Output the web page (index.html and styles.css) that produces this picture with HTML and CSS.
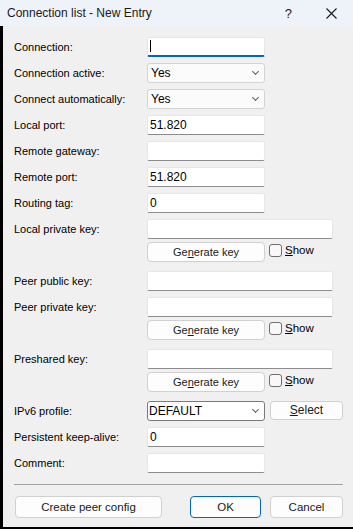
FILE: index.html
```html
<!DOCTYPE html>
<html lang="en">
  <head>
    <meta charset="UTF-8" />
    <meta name="viewport" content="width=device-width, initial-scale=1.0" />
    <title>Connection list - New Entry</title>
    <link rel="stylesheet" href="styles.css">
  </head>
  <body>
    <div class="titlebar">
      <span class="title">Connection list - New Entry</span>
      <span class="help">?</span>
      <svg class="close" width="11" height="11" viewBox="0 0 11 11">
        <path d="M0.5 0.5 L10.5 10.5 M10.5 0.5 L0.5 10.5" stroke="#1a1a1a" stroke-width="1.1" fill="none" />
      </svg>
    </div>

    <div class="frame">
      <div class="client">
        <div class="form">
          <div class="row">
            <span class="label">Connection:</span>
            <div class="edit focus"><span class="caret"></span></div>
          </div>
          <div class="row">
            <span class="label">Connection active:</span>
            <div class="combo">Yes<span class="chevron"></span></div>
          </div>
          <div class="row">
            <span class="label">Connect automatically:</span>
            <div class="combo">Yes<span class="chevron"></span></div>
          </div>
          <div class="row">
            <span class="label">Local port:</span>
            <div class="edit">51.820</div>
          </div>
          <div class="row">
            <span class="label">Remote gateway:</span>
            <div class="edit"></div>
          </div>
          <div class="row">
            <span class="label">Remote port:</span>
            <div class="edit">51.820</div>
          </div>
          <div class="row">
            <span class="label">Routing tag:</span>
            <div class="edit">0</div>
          </div>

          <div class="row key">
            <span class="label">Local private key:</span>
            <div class="keybox">
              <div class="edit wide"></div>
              <div class="keytools">
                <div class="button gen">Ge<u>n</u>erate key</div>
                <span class="check"><span class="box"></span><span><u>S</u>how</span></span>
              </div>
            </div>
          </div>
          <div class="row">
            <span class="label">Peer public key:</span>
            <div class="edit wide"></div>
          </div>
          <div class="row key">
            <span class="label">Peer private key:</span>
            <div class="keybox">
              <div class="edit wide"></div>
              <div class="keytools">
                <div class="button gen">Ge<u>n</u>erate key</div>
                <span class="check"><span class="box"></span><span><u>S</u>how</span></span>
              </div>
            </div>
          </div>
          <div class="row key">
            <span class="label">Preshared key:</span>
            <div class="keybox">
              <div class="edit wide"></div>
              <div class="keytools">
                <div class="button gen">Ge<u>n</u>erate key</div>
                <span class="check"><span class="box"></span><span><u>S</u>how</span></span>
              </div>
            </div>
          </div>

          <div class="row">
            <span class="label">IPv6 profile:</span>
            <div class="pick">
              <div class="combo editable">DEFAULT<span class="chevron"></span></div>
              <div class="button select"><u>S</u>elect</div>
            </div>
          </div>
          <div class="row">
            <span class="label">Persistent keep-alive:</span>
            <div class="edit">0</div>
          </div>
          <div class="row">
            <span class="label">Comment:</span>
            <div class="edit"></div>
          </div>
        </div>

        <div class="sep"></div>

        <div class="actions">
          <div class="button peer">Create peer config</div>
          <div class="button ok">OK</div>
          <div class="button cancel">Cancel</div>
        </div>
      </div>
    </div>
  </body>
</html>
```

FILE: styles.css
```css
/* Global */
* {
  box-sizing: border-box;
}

body {
  margin: 0;
  width: 353px;
  height: 529px;
  overflow: hidden;
  background-color: #000000;
  font-family: "Liberation Sans", Arial, sans-serif;
  font-size: 11px;
  color: #000000;
}

/* Title bar */
.titlebar {
  height: 26px;
  background-color: #eef2f9;
  display: flex;
  align-items: center;
  padding-left: 7px;
}

.title {
  font-size: 12px;
  color: #1a1a1a;
  flex: 1;
}

.help {
  font-size: 13px;
  color: #1a1a1a;
  margin-right: 34px;
}

.close {
  margin-right: 16px;
}

/* Window body */
.frame {
  height: 501px;
  margin-left: 3px;
  background-color: #f0f0f0;
}

.client {
  padding: 11px 10px 0 11px;
}

.form {
  display: flex;
  flex-direction: column;
  gap: 6px;
}

.row {
  display: flex;
  align-items: flex-start;
}

.row.key {
  margin-bottom: 3px;
}

.label {
  width: 133px;
  height: 20px;
  line-height: 20px;
  flex: none;
}

/* Controls */
.edit {
  width: 118px;
  height: 20px;
  line-height: 18px;
  padding-left: 2px;
  background-color: #ffffff;
  border: 1px solid #e6e6e6;
  border-bottom-color: #8c8c8c;
  border-radius: 2px;
  font-size: 12px;
}

.edit.wide {
  width: 186px;
}

.edit.focus {
  border-bottom: 2px solid #0067c0;
  position: relative;
}

.caret {
  position: absolute;
  left: 2px;
  top: 2px;
  width: 1px;
  height: 12px;
  background-color: #000000;
}

.combo {
  width: 118px;
  height: 20px;
  line-height: 18px;
  padding-left: 3px;
  background-color: #fbfbfb;
  border: 1px solid #d3d3d3;
  border-radius: 3px;
  font-size: 12px;
  position: relative;
}

.combo.editable {
  background-color: #ffffff;
  border-color: #7a7a7a;
  padding-left: 1px;
}

.chevron {
  position: absolute;
  right: 6px;
  top: 5px;
  width: 5px;
  height: 5px;
  border-right: 1px solid #5f5f5f;
  border-bottom: 1px solid #5f5f5f;
  transform: rotate(45deg);
}

.keybox {
  display: flex;
  flex-direction: column;
  gap: 3px;
}

.keytools {
  display: flex;
  align-items: center;
  gap: 4px;
}

.button {
  height: 20px;
  line-height: 18px;
  text-align: center;
  background-color: #fdfdfd;
  border: 1px solid #d0d0d0;
  border-radius: 4px;
  color: #1a1a1a;
}

.button.gen {
  width: 118px;
}

.check {
  display: flex;
  align-items: center;
  gap: 3px;
  height: 20px;
  margin-top: -4px;
  font-size: 11.5px;
}

.box {
  width: 13px;
  height: 13px;
  border: 1px solid #6f6f6f;
  border-radius: 3px;
  background-color: #f8f8f8;
}

.pick {
  display: flex;
  gap: 5px;
}

.button.select {
  width: 73px;
  height: 19px;
  line-height: 17px;
  font-size: 12px;
}

/* Separator and bottom buttons */
.sep {
  height: 1px;
  margin: 11px 0 11px 0;
  width: 329px;
  background-color: #a0a0a0;
}

.actions {
  display: flex;
  height: 22px;
}

.actions .button {
  height: 22px;
  line-height: 20px;
  font-size: 11.5px;
}

.button.peer {
  width: 147px;
  margin-left: 1px;
}

.button.ok {
  width: 71px;
  margin-left: 28px;
  border-color: #0067c0;
}

.button.cancel {
  width: 73px;
  margin-left: 9px;
}
```
